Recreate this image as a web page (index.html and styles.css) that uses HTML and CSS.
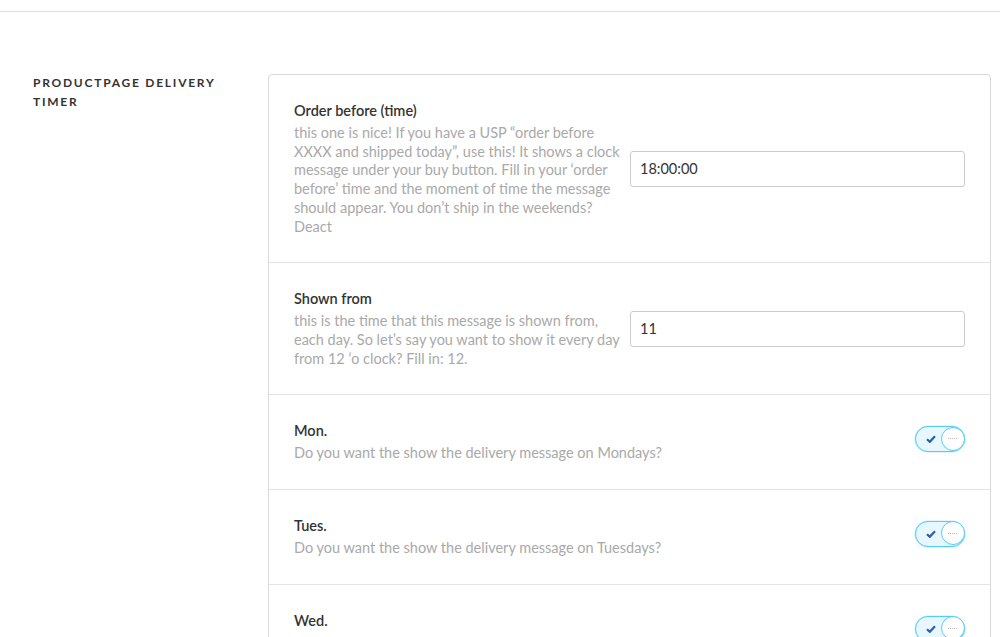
FILE: index.html
```html
<!DOCTYPE html>
<html>
<head>
<meta charset="utf-8">
<link rel="stylesheet" href="styles.css">
</head>
<body>
<div class="topbar"></div>
<section class="settings-section">
  <h2 class="section-label">PRODUCTPAGE DELIVERY TIMER</h2>
  <div class="card">
    <div class="row">
      <div class="row-text narrow">
        <div class="row-title">Order before (time)</div>
        <div class="row-desc">this one is nice! If you have a USP “order before XXXX and shipped today”, use this! It shows a clock message under your buy button. Fill in your ‘order before’ time and the moment of time the message should appear. You don’t ship in the weekends? Deact</div>
      </div>
      <input class="text-input" type="text" value="18:00:00">
    </div>
    <div class="row">
      <div class="row-text narrow">
        <div class="row-title">Shown from</div>
        <div class="row-desc">this is the time that this message is shown from, each day. So let’s say you want to show it every day from 12 ‘o clock? Fill in: 12.</div>
      </div>
      <input class="text-input" type="text" value="11">
    </div>
    <div class="row">
      <div class="row-text">
        <div class="row-title">Mon.</div>
        <div class="row-desc">Do you want the show the delivery message on Mondays?</div>
      </div>
      <span class="toggle"><svg class="check" width="10" height="8" viewBox="0 0 10 8"><path d="M1 4.2 L3.8 6.8 L9 1.2" fill="none" stroke="#2a5fad" stroke-width="2.2"/></svg><span class="knob"><span class="dots"></span></span></span>
    </div>
    <div class="row">
      <div class="row-text">
        <div class="row-title">Tues.</div>
        <div class="row-desc">Do you want the show the delivery message on Tuesdays?</div>
      </div>
      <span class="toggle"><svg class="check" width="10" height="8" viewBox="0 0 10 8"><path d="M1 4.2 L3.8 6.8 L9 1.2" fill="none" stroke="#2a5fad" stroke-width="2.2"/></svg><span class="knob"><span class="dots"></span></span></span>
    </div>
    <div class="row">
      <div class="row-text">
        <div class="row-title">Wed.</div>
        <div class="row-desc">Do you want the show the delivery message on Wednesdays?</div>
      </div>
      <span class="toggle"><svg class="check" width="10" height="8" viewBox="0 0 10 8"><path d="M1 4.2 L3.8 6.8 L9 1.2" fill="none" stroke="#2a5fad" stroke-width="2.2"/></svg><span class="knob"><span class="dots"></span></span></span>
    </div>
  </div>
</section>
</body>
</html>
```

FILE: styles.css
```css
* { box-sizing: border-box; }
html, body {
  margin: 0;
  padding: 0;
  background: #fff;
  font-family: Lato, "Open Sans", sans-serif;
  color: #333;
  overflow: hidden;
  height: 637px;
}
.topbar {
  height: 12px;
  border-bottom: 1px solid #dcdcdc;
}
.settings-section {
  display: flex;
  align-items: flex-start;
  padding: 62px 9px 0 33px;
}
.section-label {
  width: 235px;
  flex: none;
  margin: -1px 0 0 0;
  font-size: 12px;
  font-weight: 700;
  letter-spacing: 1.75px;
  line-height: 19px;
  color: #333;
  padding-right: 30px;
}
.card {
  flex: 1;
  border: 1px solid #d9d9d9;
  border-radius: 4px;
  background: #fff;
}
.row {
  display: flex;
  align-items: center;
  padding: 26px 25px 26px 25px;
  border-bottom: 1px solid #e4e4e4;
}
.row-text {
  flex: 1;
}
.row-text.narrow {
  flex: none;
  width: 336px;
  padding-right: 5px;
}
.row-title {
  font-size: 14.5px;
  font-weight: 600;
  line-height: 20px;
  margin-bottom: 3px;
  color: #333;
}
.row-desc {
  font-size: 14.5px;
  line-height: 18.7px;
  color: #a9a9a9;
}
.text-input {
  flex: 1;
  height: 36px;
  border: 1px solid #cbcbcb;
  border-radius: 3px;
  padding: 0 9px;
  font-family: Lato, "Open Sans", sans-serif;
  font-size: 14.5px;
  color: #333;
  background: #fff;
  outline: none;
}
.toggle {
  flex: none;
  position: relative;
  display: flex;
  align-items: center;
  width: 50px;
  height: 26px;
  border: 1.5px solid #55cdf4;
  border-radius: 13px;
  background: #e7f7fd;
  margin-bottom: 6px;
  box-shadow: 0 0 0 0.5px #bfeafb;
}
.check {
  margin-left: 10px;
}
.knob {
  position: absolute;
  right: -0.5px;
  top: -0.5px;
  width: 24px;
  height: 24px;
  border-radius: 50%;
  border: 1.5px solid #55cdf4;
  background: #fff;
  display: flex;
  align-items: center;
  justify-content: center;
}
.dots {
  width: 9px;
  height: 1px;
  background-image: linear-gradient(to right, #bbb 50%, transparent 50%);
  background-size: 2px 1px;
}
```
